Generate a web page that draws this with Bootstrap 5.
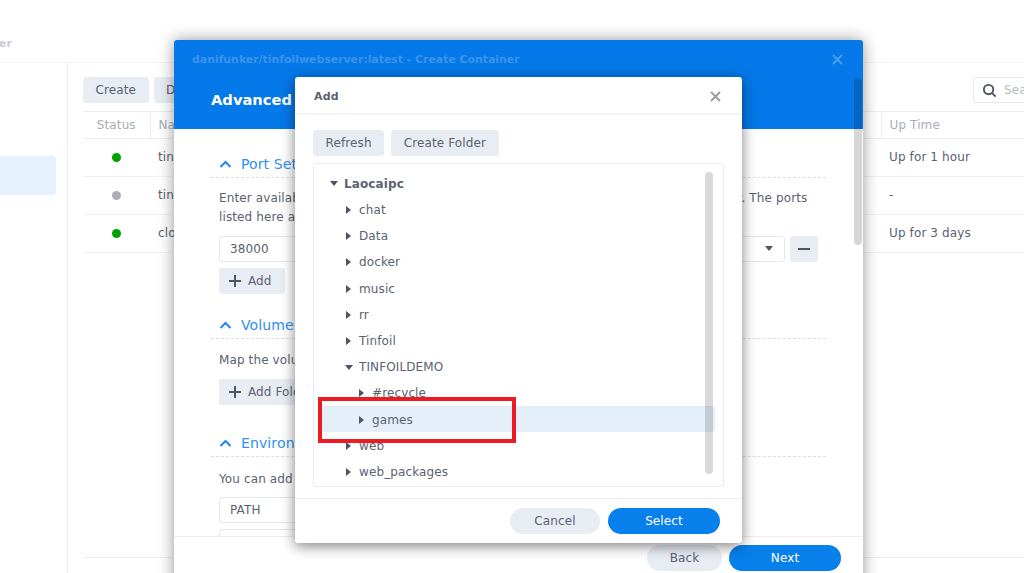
<!doctype html>
<html lang="en">
<head>
<meta charset="utf-8">
<title>Create Container</title>
<link rel="stylesheet" href="https://cdn.jsdelivr.net/npm/bootstrap@5.3.0/dist/css/bootstrap.min.css">
<style>
html,body{height:100%;margin:0}
body{width:1024px;height:573px;overflow:hidden;position:relative;background:#fff;font-family:"DejaVu Sans",sans-serif;font-size:12px;color:#5a6270;letter-spacing:.12px}
.apptop{height:63px;border-bottom:1px solid #f1f4f8}
.apptitle{width:12px;height:63px;padding-top:36px;overflow:hidden;font-weight:700;font-size:11px;color:#c9ccd1;white-space:nowrap;justify-content:flex-end}
.appside{width:68px;height:510px;border-right:1px solid #eef1f6;padding-top:93px}
.sideitem{width:56px;height:39px;background:#e5f1fd;border-radius:0 4px 4px 0}
.appmain{padding:14px 0 0 15px;min-width:0;flex:1;overflow:hidden;height:510px;display:flex;flex-direction:column}
.tool{height:26px;padding:0 12.5px;font-size:12px;line-height:26px;border:0;border-radius:3px;background:#e8edf4;color:#5a6270;white-space:nowrap;letter-spacing:.12px}
.tool:hover{background:#e8edf4;color:#5a6270}
.toolnext{margin-left:5px}
.searchbox{width:80px;height:26px;border:1px solid #e5e9f0;border-radius:4px 0 0 4px;border-right:0;color:#b9bdc4;padding-left:8px;gap:7px;margin-right:-29px;overflow:hidden}
.grid{table-layout:fixed;width:942px;margin:8px 0 0;border-collapse:collapse;font-size:12px;color:#5a6270}
.grid th{height:27px;font-weight:400;color:#a9adb4;border-top:1px solid #eaedf3;border-bottom:1px solid #eaedf3;padding:0 8px;vertical-align:middle}
.grid th+th{border-left:1px solid #eaedf3}
.grid td{height:38px;padding:0 8px 1px;border-bottom:1px solid #eff2f7;vertical-align:middle;background:#fff}
.statdot{display:block;width:9px;height:9px;border-radius:50%;margin:0 auto}
.dot-on{background:#00a000}.dot-off{background:#aeaeb6}
.appfoot{margin-top:auto;height:16px;border-top:1px solid #eaedf3}
.win{position:absolute;background:#fff;border-radius:3px;overflow:hidden}
.win-create{left:174px;top:40px;width:689px;height:560px;box-shadow:0 0 16px rgba(0,0,0,.42)}
.create-head{height:89px;background:#0579e9;padding:13px 20px 0 18px;color:#fff}
.create-title{font-weight:700;font-size:10.9px;color:#3b93ec;line-height:13px;letter-spacing:0}
.create-h{font-weight:700;font-size:14.7px;margin-top:22px;margin-left:19px;line-height:24px;letter-spacing:0}
.closebtn{background:none;border:0;padding:0;line-height:0}
.create-body{padding:29px 37px 0 37px;height:407px;overflow:hidden}
.secthead{height:19px;border-bottom:1px dashed #d9dde3;color:#2e8ff0;font-size:14px;line-height:13px;padding-left:8px;gap:9px;box-sizing:content-box;padding-bottom:0}
.gap-volume{margin-top:25px}
.gap-env{margin-top:32px}
.para{margin:12px 0 0 8px;line-height:19px;width:595px;font-size:12px;color:#5a6270}
.para1{margin-top:11px}
.para3{margin-top:13px}
.fieldline{gap:5px;margin:9px 0 0 8px;width:599px}
.fieldline2{margin-top:6px}
.fieldline3{margin-top:8px}
.fld{height:26px;border:1px solid #e3e7ee;border-radius:3px;padding:0 10px;line-height:24px;color:#5a6270;background:#fff}
.fld-select{width:120px}
.fld-env{width:300px}
.sq{width:28px;height:26px;background:#e8edf4;border-radius:3px}
.addbtn{height:26px;margin:6px 0 0 8px;padding:0 13px 0 10px;background:#e8edf4;border-radius:3px;line-height:26px;border:0;color:#5a6270;font-size:12px;gap:7px;letter-spacing:.12px}
.addbtn2{margin-top:9px}
.create-foot{height:64px;border-top:1px solid #eaedf3;padding:8px 22px 0 0;gap:7px;justify-content:flex-end;background:#fff}
.pill{height:26px;border:0;border-radius:13px;font-size:12px;line-height:26px;padding:0;letter-spacing:.12px}
.pill-grey,.pill-grey:hover{background:#e8edf4;color:#5a6270}
.pill-blue,.pill-blue:hover{background:#0780ec;color:#fff}
.w-back{width:75px}.w-next{width:112px}.w-cancel{width:90px}.w-select{width:112px}
.winbar{position:absolute;left:680px;top:38px;width:8px;height:167px;background:rgba(0,0,0,.16);border-radius:4px}
.win-add{left:295px;top:77px;width:447px;height:466px;box-shadow:0 3px 14px rgba(0,0,0,.5)}
.add-head{height:38px;border-bottom:2px solid #f0f3f8;padding:2px 21px 0 19px;font-weight:700;font-size:11px;color:#5a6270}
.add-title{padding-top:2px}
.add-body{padding:15px 18px 0 18px}
.add-tools{gap:7px}
.treebox{position:relative;height:324px;margin-top:7px;border:1px solid #e8ecf2;border-radius:3px;padding:6.5px 8px 0 8px;overflow:hidden}
.trow{height:26.2px;padding-top:.6px;color:#5a6270;font-size:12px;white-space:nowrap;display:flex;align-items:center}
.trow svg{flex:none}
.lv0{padding-left:8px;font-weight:700;gap:6px}
.lv1{padding-left:24px;gap:8px}
.lv1o{padding-left:23px;gap:6px}
.lv2{padding-left:37px;gap:8px}
.tsel{background:#e4eff9;border-radius:3px}
.treebar{position:absolute;left:391px;top:8px;width:8px;height:302px;background:rgba(0,0,0,.15);border-radius:4px}
.add-foot{height:46px;margin-top:11px;border-top:1px solid #eaeff5;padding:9px 22px 0 0;gap:8px;justify-content:flex-end}
.redbox{position:absolute;left:318px;top:397px;width:198px;height:46px;border:4px solid #ed1c24}
</style>
</head>
<body>
<div class="apptop d-flex"><div class="apptitle d-flex"><span>Container Manager</span></div></div>
<div class="d-flex">
  <div class="appside flex-shrink-0"><div class="sideitem"></div></div>
  <div class="appmain">
    <div class="d-flex align-items-center">
      <button class="btn tool" type="button">Create</button>
      <button class="btn tool toolnext" type="button">Details</button>
      <div class="searchbox d-flex align-items-center ms-auto">
        <svg width="15" height="15" viewBox="0 0 16 16" fill="none" stroke="#4c5563" stroke-width="2"><circle cx="7" cy="7" r="5"/><path d="M10.500 10.500 14.500 14.500"/></svg>
        <span>Search</span>
      </div>
    </div>
    <table class="grid">
      <colgroup><col style="width:67px"><col style="width:731px"><col></colgroup>
      <thead><tr><th class="text-center">Status</th><th>Name</th><th>Up Time</th></tr></thead>
      <tbody>
        <tr><td><span class="statdot dot-on"></span></td><td>tinfoilwebserver</td><td>Up for 1 hour</td></tr>
        <tr><td><span class="statdot dot-off"></span></td><td>tinfoilwebserver-1</td><td>-</td></tr>
        <tr><td><span class="statdot dot-on"></span></td><td>cloudflared</td><td>Up for 3 days</td></tr>
      </tbody>
    </table>
    <div class="appfoot"></div>
  </div>
</div>

<div class="win win-create">
  <div class="create-head">
    <div class="d-flex justify-content-between align-items-center">
      <div class="create-title">danifunker/tinfoilwebserver:latest - Create Container</div>
      <button class="closebtn" type="button" aria-label="Close"><svg width="11" height="11" viewBox="0 0 11 11" stroke="#4b9ff0" stroke-width="2"><path d="M1 1 10 10M10 1 1 10"/></svg></button>
    </div>
    <div class="create-h">Advanced Settings</div>
  </div>
  <div class="create-body">
    <div class="secthead d-flex align-items-start"><svg width="13" height="13" viewBox="0 0 13 13" fill="none" stroke="#1d87ee" stroke-width="2"><path d="M1.500 9 6.500 4 11.500 9"/></svg><span>Port Settings</span></div>
    <p class="para para1">Enter available local ports to access the web services running inside of this container. The ports listed here are reserved for this container only.</p>
    <div class="fieldline d-flex">
      <div class="fld flex-grow-1">38000</div>
      <div class="fld fld-select d-flex align-items-center justify-content-end"><svg width="10" height="6" viewBox="0 0 10 6" fill="#4c5563"><path d="M1 0H9L5 5Z"/></svg></div>
      <div class="sq d-flex align-items-center justify-content-center"><svg width="12" height="2" viewBox="0 0 12 2" fill="#4c5563"><rect width="12" height="2"/></svg></div>
    </div>
    <button class="addbtn d-flex align-items-center" type="button"><svg width="12" height="12" viewBox="0 0 12 12" fill="#4c5563"><path d="M5 0H7V5H12V7H7V12H5V7H0V5H5Z"/></svg>Add</button>
    <div class="secthead gap-volume d-flex align-items-start"><svg width="13" height="13" viewBox="0 0 13 13" fill="none" stroke="#1d87ee" stroke-width="2"><path d="M1.500 9 6.500 4 11.500 9"/></svg><span>Volume Settings</span></div>
    <p class="para">Map the volume to a local folder.</p>
    <button class="addbtn addbtn2 d-flex align-items-center" type="button"><svg width="12" height="12" viewBox="0 0 12 12" fill="#4c5563"><path d="M5 0H7V5H12V7H7V12H5V7H0V5H5Z"/></svg>Add Folder</button>
    <div class="secthead gap-env d-flex align-items-start"><svg width="13" height="13" viewBox="0 0 13 13" fill="none" stroke="#1d87ee" stroke-width="2"><path d="M1.500 9 6.500 4 11.500 9"/></svg><span>Environment</span></div>
    <p class="para para3">You can add environment variables.</p>
    <div class="fieldline fieldline3 d-flex"><div class="fld fld-env">PATH</div></div>
    <div class="fieldline fieldline2 d-flex"><div class="fld fld-env"></div></div>
  </div>
  <div class="create-foot d-flex">
    <button class="btn pill pill-grey w-back" type="button">Back</button>
    <button class="btn pill pill-blue w-next" type="button">Next</button>
  </div>
  <div class="winbar"></div>
</div>

<div class="win win-add">
  <div class="add-head d-flex align-items-center justify-content-between">
    <span class="add-title">Add</span>
    <button class="closebtn" type="button" aria-label="Close"><svg width="11" height="11" viewBox="0 0 11 11" stroke="#9a9fa6" stroke-width="2"><path d="M1 1 10 10M10 1 1 10"/></svg></button>
  </div>
  <div class="add-body">
    <div class="add-tools d-flex">
      <button class="btn tool" type="button">Refresh</button>
      <button class="btn tool" type="button">Create Folder</button>
    </div>
    <div class="treebox">
      <div class="trow lv0"><svg width="8" height="5" viewBox="0 0 8 5" fill="#4c5563"><path d="M0 0H8L4 5Z"/></svg>Laocaipc</div>
      <div class="trow lv1"><svg width="5" height="8" viewBox="0 0 5 8" fill="#4c5563"><path d="M0 0V8L5 4Z"/></svg>chat</div>
      <div class="trow lv1"><svg width="5" height="8" viewBox="0 0 5 8" fill="#4c5563"><path d="M0 0V8L5 4Z"/></svg>Data</div>
      <div class="trow lv1"><svg width="5" height="8" viewBox="0 0 5 8" fill="#4c5563"><path d="M0 0V8L5 4Z"/></svg>docker</div>
      <div class="trow lv1"><svg width="5" height="8" viewBox="0 0 5 8" fill="#4c5563"><path d="M0 0V8L5 4Z"/></svg>music</div>
      <div class="trow lv1"><svg width="5" height="8" viewBox="0 0 5 8" fill="#4c5563"><path d="M0 0V8L5 4Z"/></svg>rr</div>
      <div class="trow lv1"><svg width="5" height="8" viewBox="0 0 5 8" fill="#4c5563"><path d="M0 0V8L5 4Z"/></svg>Tinfoil</div>
      <div class="trow lv1o"><svg width="8" height="5" viewBox="0 0 8 5" fill="#4c5563"><path d="M0 0H8L4 5Z"/></svg>TINFOILDEMO</div>
      <div class="trow lv2"><svg width="5" height="8" viewBox="0 0 5 8" fill="#4c5563"><path d="M0 0V8L5 4Z"/></svg>#recycle</div>
      <div class="trow lv2 tsel"><svg width="5" height="8" viewBox="0 0 5 8" fill="#4c5563"><path d="M0 0V8L5 4Z"/></svg>games</div>
      <div class="trow lv1"><svg width="5" height="8" viewBox="0 0 5 8" fill="#4c5563"><path d="M0 0V8L5 4Z"/></svg>web</div>
      <div class="trow lv1"><svg width="5" height="8" viewBox="0 0 5 8" fill="#4c5563"><path d="M0 0V8L5 4Z"/></svg>web_packages</div>
      <div class="treebar"></div>
    </div>
  </div>
  <div class="add-foot d-flex">
    <button class="btn pill pill-grey w-cancel" type="button">Cancel</button>
    <button class="btn pill pill-blue w-select" type="button">Select</button>
  </div>
</div>
<div class="redbox"></div>
</body>
</html>
